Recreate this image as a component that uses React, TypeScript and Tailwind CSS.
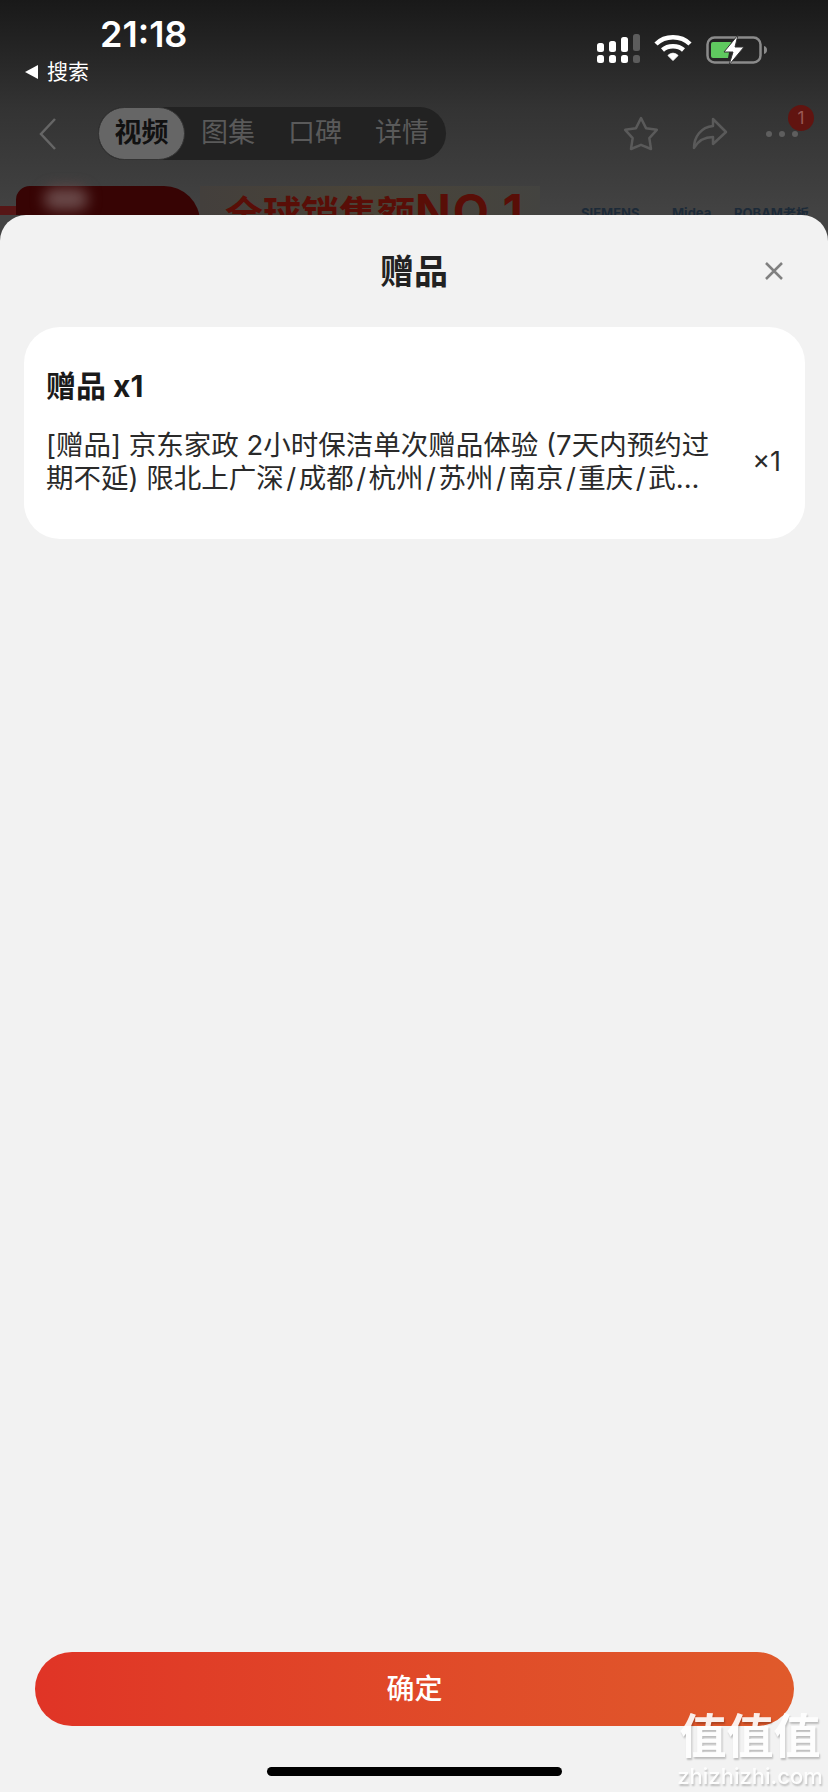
import React from 'react';

const cjk = { fontFamily: '"Inter", "Noto Sans CJK SC", sans-serif' };

const SignalIcon = () => (
  <svg width="43" height="30" viewBox="0 0 43 30">
    {[0, 12, 24].map((x, i) => (
      <g key={x} fill="#fff">
        <rect x={x} y={[9, 7, 3][i]} width="7" height={[9, 11, 15][i]} rx="2.5" />
        <rect x={x} y="21" width="7" height="8" rx="2.5" />
      </g>
    ))}
    <rect x="36" y="0" width="7" height="17" rx="2.5" fill="#5c5c5c" />
    <rect x="36" y="21" width="7" height="8" rx="2.5" fill="#5c5c5c" />
  </svg>
);

const WifiIcon = () => (
  <svg width="38" height="28" viewBox="0 0 38 28" fill="none" stroke="#fff" strokeWidth="4.5">
    <path d="M2 10 C11 1 27 1 36 10" />
    <path d="M8.5 16 C14 11 24 11 29.5 16" />
    <path d="M14 21.5 L19 26.5 L24 21.5 C21 18.5 17 18.5 14 21.5 Z" fill="#fff" strokeWidth="1" />
  </svg>
);

const BatteryIcon = () => (
  <svg width="62" height="32" viewBox="0 0 62 32">
    <rect x="1.5" y="3.5" width="53" height="25" rx="7" fill="none" stroke="#8b8b8b" strokeWidth="2.5" />
    <path d="M7 8 h18 l-3 16 h-15 a2 2 0 0 1 -2 -2 v-12 a2 2 0 0 1 2 -2 Z" fill="#5fc95f" />
    <path d="M58 12 c2 .5 3 2 3 4 s-1 3.500 -3 4 Z" fill="#8b8b8b" />
    <path d="M32 1 L18 18 H27 L23 31 L38 13 H29 Z" fill="#fff" stroke="#333" strokeWidth="1" />
  </svg>
);

const App = () => {
  const tabs = ['图集', '口碑', '详情'];

  return (
    <div className="relative h-[1792px] w-[828px] overflow-hidden flex flex-col bg-[#434343]" style={cjk}>
      {/* dimmed page behind the sheet */}
      <div className="relative h-[215px] shrink-0 bg-gradient-to-b from-[#191919] via-[#333333] to-[#434343] flex flex-col">
        <div className="h-[107px] shrink-0 flex justify-between pl-[25px] pr-[60px]">
          <div className="flex flex-col">
            <span className="pl-[75px] pt-[13px] text-[36px] leading-[42px] font-semibold text-white">21:18</span>
            <div className="flex items-center gap-[9px] h-[30px] mt-[2px] text-white">
              <span className="w-0 h-0 border-y-[7px] border-y-transparent border-r-[13px] border-r-white" />
              <span className="text-[21px]">搜索</span>
            </div>
          </div>
          <div className="flex items-start gap-[14px] pt-[34px]">
            <SignalIcon />
            <WifiIcon />
            <BatteryIcon />
          </div>
        </div>

        <div className="h-[53px] shrink-0 flex items-center pl-[39px]">
          <svg width="18" height="32" viewBox="0 0 18 32" fill="none" stroke="#666666" strokeWidth="2.5">
            <path d="M16 1 L2 16 L16 31" />
          </svg>
          <div className="ml-[41px] h-[53px] w-[348px] flex items-center rounded-full bg-[#222222]">
            <div className="h-[53px] w-[87px] flex items-center justify-center rounded-full bg-[#666666] border border-[#333333] text-[27px] font-bold text-[#111111]">
              视频
            </div>
            <div className="flex gap-[33px] pl-[16px]">
              {tabs.map((t) => (
                <span key={t} className="text-[27px] text-[#5a5a5a]">{t}</span>
              ))}
            </div>
          </div>
          <svg className="ml-[175px]" width="40" height="40" viewBox="0 0 24 24" fill="none" stroke="#5a5a5a" strokeWidth="1.5" strokeLinejoin="round">
            <path d="M12 2.500 L15 8.500 L21.500 9.500 L17 14.500 L18 21 L12 18.500 L6 21 L7 14.500 L2.500 9.500 L9 8.500 Z" />
          </svg>
          <svg className="ml-[31px]" width="36" height="34" viewBox="0 0 36 34" fill="none" stroke="#5a5a5a" strokeWidth="2.5" strokeLinejoin="round">
            <path d="M21 2 L34 15 L21 27 V20 C12 20 6 24 2 31 C2 20 9 10 21 9 Z" />
          </svg>
          <div className="ml-[38px] flex gap-[7px]">
            <span className="w-[6px] h-[6px] rounded-full bg-[#5e5e5e]" />
            <span className="w-[6px] h-[6px] rounded-full bg-[#5e5e5e]" />
            <span className="w-[6px] h-[6px] rounded-full bg-[#5e5e5e]" />
          </div>
          <span className="absolute left-[788px] top-[105px] w-[26px] h-[26px] rounded-full bg-[#611410] text-[#9a5a55] text-[17px] leading-[26px] text-center">1</span>
        </div>

        {/* banner, cut off by the sheet */}
        <div className="flex-1 overflow-hidden flex items-start pt-[26px] relative">
          <div className="w-[16px] mt-[20px] h-[20px] bg-[#561616]" />
          <div className="relative w-[184px] h-[40px] bg-[#370404] rounded-tl-[14px] rounded-tr-[36px]">
            <div className="absolute left-[28px] top-[2px] w-[44px] h-[22px] rounded-full bg-[#6a4a4a] blur-[7px]" />
          </div>
          <div className="w-[340px] h-[40px] pl-[25px] pt-[3px] bg-gradient-to-r from-[#433f3c] via-[#4a4438] to-[#434340] leading-[44px] font-bold text-[#590e07] whitespace-nowrap">
            <span className="text-[38px]">全球销售额</span>
            <span className="text-[47px] tracking-[2px]">NO.1</span>
          </div>
          <div className="ml-[41px] pt-[18px] flex items-start text-[13px] font-bold text-[#1c2a38] whitespace-nowrap">
            <span className="w-[91px]">SIEMENS</span>
            <span className="w-[62px]">Midea</span>
            <span>ROBAM老板</span>
          </div>
        </div>
      </div>

      {/* bottom sheet */}
      <div className="flex-1 rounded-t-[26px] bg-[#f2f2f2] flex flex-col relative">
        <div className="h-[112px] shrink-0 flex items-center justify-center relative">
          <span className="text-[34px] font-semibold text-[#222222]">赠品</span>
          <svg className="absolute right-[45px] top-[47px]" width="18" height="18" viewBox="0 0 18 18" stroke="#808080" strokeWidth="2.5">
            <path d="M1 1 L17 17 M17 1 L1 17" />
          </svg>
        </div>

        <div className="ml-[24px] mr-[23px] h-[212px] rounded-[36px] bg-white pl-[22px] pr-[24px] pt-[39px] text-[#222222]">
          <div className="text-[30px] leading-[40px] font-bold text-[#1a1a1a]">赠品 x1</div>
          <div className="mt-[23px] flex items-center justify-between">
            <p className="w-[672px] text-[27.5px] leading-[33px] text-[#2a2a2a]">
              [赠品] 京东家政 2小时保洁单次赠品体验 (7天内预约过期不延) 限北上广深{'\u200A/\u200A'}成都{'\u200A/\u200A'}杭州{'\u200A/\u200A'}苏州{'\u200A/\u200A'}南京{'\u200A/\u200A'}重庆{'\u200A/\u200A'}武...
            </p>
            <span className="text-[27px] text-[#2a2a2a]">×1</span>
          </div>
        </div>

        <div className="mt-auto pl-[35px] pr-[34px]">
          <button className="h-[74px] w-full rounded-full bg-gradient-to-r from-[#e03426] to-[#e05a2b] text-[28px] font-medium text-white">
            确定
          </button>
        </div>
        <div className="h-[66px] shrink-0 flex justify-center pt-[41px]">
          <div className="w-[295px] h-[9px] rounded-full bg-black" />
        </div>
      </div>

      {/* site watermark */}
      <div className="absolute left-[678px] top-[1708px] w-[144px] flex flex-col items-center text-white [text-shadow:1px_2px_2px_rgba(0,0,0,0.25)] opacity-90">
        <span className="text-[47px] h-[56px] leading-[56px] font-bold whitespace-nowrap">值值值</span>
        <span className="text-[22px] leading-[24px] font-medium whitespace-nowrap">zhizhizhi.com</span>
      </div>
    </div>
  );
};

export default App;
